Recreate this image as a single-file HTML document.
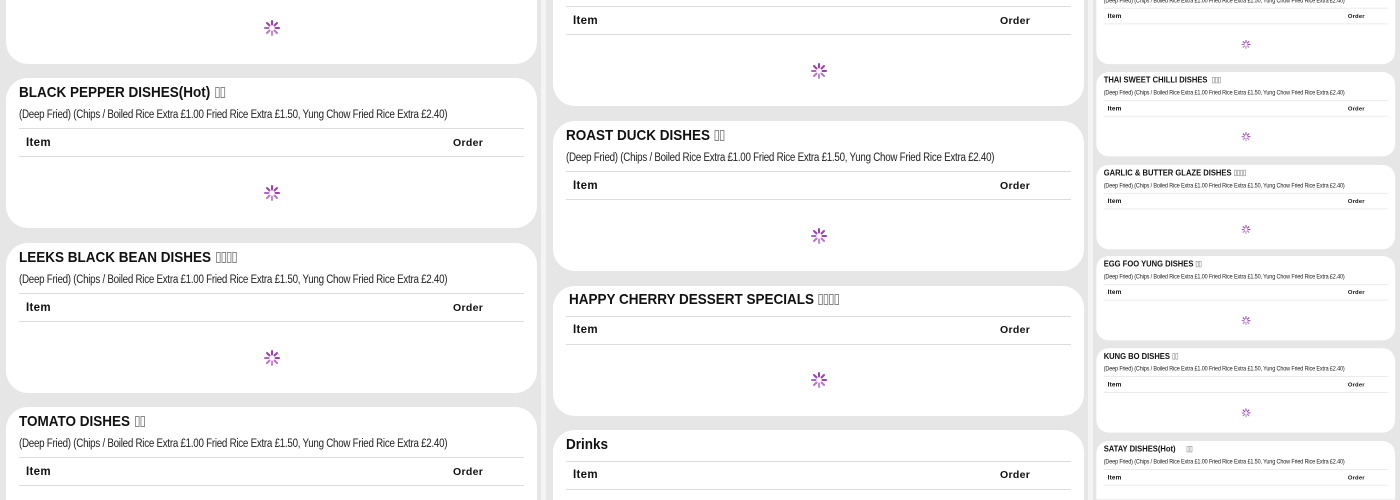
<!DOCTYPE html>
<html><head><meta charset="utf-8"><style>
*{margin:0;padding:0;box-sizing:border-box}
html,body{width:1400px;height:500px;overflow:hidden}
body{background:#e6e6e6;font-family:"Liberation Sans",sans-serif;position:relative;color:#111}
.col{position:absolute;top:0;width:541px;height:500px;overflow:hidden}
.sep{position:absolute;top:0;height:500px;background:#f4f4f4}
.card{position:absolute;left:6px;width:531px;background:#fff;border-radius:22px}
.t{position:absolute;left:13px;font-weight:bold;font-size:15px;line-height:18px;white-space:nowrap;transform:scaleX(0.9);transform-origin:0 0}
.s{position:absolute;left:13px;font-size:11.5px;line-height:14px;white-space:nowrap;letter-spacing:-0.3px;color:#222;transform:scaleX(0.85);transform-origin:0 0}
.ln{position:absolute;left:13px;right:13px;height:1px;background:#dcdcdc}
.i{position:absolute;left:20px;font-weight:bold;font-size:11.5px;line-height:14px;letter-spacing:.3px}
.o{position:absolute;left:447px;font-weight:bold;font-size:10.5px;line-height:14px;letter-spacing:.3px}
.sp{position:absolute;left:257px;width:18px;height:18px}
.bx{display:inline-block;width:5px;height:11px;border:1px solid #888;margin-left:1px;vertical-align:-1px}
</style></head><body>
<svg width="0" height="0" style="position:absolute;top:0;left:0"><defs><g id="spin" stroke="#a03cb8" stroke-width="2" stroke-linecap="round"><line x1="9" y1="2" x2="9" y2="5.5"/><line x1="9" y1="12.5" x2="9" y2="16" opacity=".6"/><line x1="2" y1="9" x2="5.5" y2="9" opacity=".8"/><line x1="12.5" y1="9" x2="16" y2="9"/><line x1="4" y1="4" x2="6.5" y2="6.5"/><line x1="11.5" y1="11.5" x2="14" y2="14" opacity=".7"/><line x1="14" y1="4" x2="11.5" y2="6.5"/><line x1="4" y1="14" x2="6.5" y2="11.5" opacity=".7"/></g></defs></svg>

<div class="sep" style="left:541px;width:5px"></div>
<div class="sep" style="left:1088px;width:5px"></div>

<!-- Column 1 -->
<div class="col" style="left:0">
 <div class="card" style="top:-86px;height:150px">
  <div class="ln" style="top:77px"></div><svg class="sp" style="top:105px"><use href="#spin"/></svg>
 </div>
 <div class="card" style="top:78px;height:150px">
  <div class="t" style="top:6px">BLACK PEPPER DISHES(Hot) <span class="bx"></span><span class="bx"></span></div>
  <div class="s" style="top:30px">(Deep Fried) (Chips / Boiled Rice Extra £1.00 Fried Rice Extra £1.50, Yung Chow Fried Rice Extra £2.40)</div>
  <div class="ln" style="top:50px"></div><div class="i" style="top:58px">Item</div><div class="o" style="top:58px">Order</div>
  <div class="ln" style="top:78px"></div><svg class="sp" style="top:106px"><use href="#spin"/></svg>
 </div>
 <div class="card" style="top:243px;height:150px">
  <div class="t" style="top:6px">LEEKS BLACK BEAN DISHES <span class="bx"></span><span class="bx"></span><span class="bx"></span><span class="bx"></span></div>
  <div class="s" style="top:30px">(Deep Fried) (Chips / Boiled Rice Extra £1.00 Fried Rice Extra £1.50, Yung Chow Fried Rice Extra £2.40)</div>
  <div class="ln" style="top:50px"></div><div class="i" style="top:58px">Item</div><div class="o" style="top:58px">Order</div>
  <div class="ln" style="top:78px"></div><svg class="sp" style="top:106px"><use href="#spin"/></svg>
 </div>
 <div class="card" style="top:407px;height:150px">
  <div class="t" style="top:6px">TOMATO DISHES <span class="bx"></span><span class="bx"></span></div>
  <div class="s" style="top:30px">(Deep Fried) (Chips / Boiled Rice Extra £1.00 Fried Rice Extra £1.50, Yung Chow Fried Rice Extra £2.40)</div>
  <div class="ln" style="top:50px"></div><div class="i" style="top:58px">Item</div><div class="o" style="top:58px">Order</div>
  <div class="ln" style="top:78px"></div>
 </div>
</div>

<!-- Column 2 -->
<div class="col" style="left:547px">
 <div class="card" style="top:-44px;height:150px">
  <div class="ln" style="top:50px"></div><div class="i" style="top:58px">Item</div><div class="o" style="top:58px">Order</div>
  <div class="ln" style="top:78px"></div><svg class="sp" style="top:106px"><use href="#spin"/></svg>
 </div>
 <div class="card" style="top:121px;height:150px">
  <div class="t" style="top:6px">ROAST DUCK DISHES <span class="bx"></span><span class="bx"></span></div>
  <div class="s" style="top:30px">(Deep Fried) (Chips / Boiled Rice Extra £1.00 Fried Rice Extra £1.50, Yung Chow Fried Rice Extra £2.40)</div>
  <div class="ln" style="top:50px"></div><div class="i" style="top:58px">Item</div><div class="o" style="top:58px">Order</div>
  <div class="ln" style="top:78px"></div><svg class="sp" style="top:106px"><use href="#spin"/></svg>
 </div>
 <div class="card" style="top:286px;height:130px">
  <div class="t" style="top:5px;left:16px">HAPPY CHERRY DESSERT SPECIALS <span class="bx"></span><span class="bx"></span><span class="bx"></span><span class="bx"></span></div>
  <div class="ln" style="top:30px"></div><div class="i" style="top:37px">Item</div><div class="o" style="top:37px">Order</div>
  <div class="ln" style="top:58px"></div><svg class="sp" style="top:85px"><use href="#spin"/></svg>
 </div>
 <div class="card" style="top:430px;height:130px">
  <div class="t" style="top:6px">Drinks</div>
  <div class="ln" style="top:31px"></div><div class="i" style="top:38px">Item</div><div class="o" style="top:38px">Order</div>
  <div class="ln" style="top:59px"></div>
 </div>
</div>

<!-- Column 3 (scaled) -->
<div class="col" style="left:1093px;transform:scale(0.5625);transform-origin:0 0;height:888px">
 <div class="card" style="top:-36px;height:150px">
  <div class="s" style="top:30px">(Deep Fried) (Chips / Boiled Rice Extra £1.00 Fried Rice Extra £1.50, Yung Chow Fried Rice Extra £2.40)</div>
  <div class="ln" style="top:50px"></div><div class="i" style="top:58px">Item</div><div class="o" style="top:58px">Order</div>
  <div class="ln" style="top:78px"></div><svg class="sp" style="top:106px"><use href="#spin"/></svg>
 </div>
 <div class="card" style="top:128px;height:150px">
  <div class="t" style="top:6px">THAI SWEET CHILLI DISHES &nbsp;<span class="bx"></span><span class="bx"></span><span class="bx"></span></div>
  <div class="s" style="top:30px">(Deep Fried) (Chips / Boiled Rice Extra £1.00 Fried Rice Extra £1.50, Yung Chow Fried Rice Extra £2.40)</div>
  <div class="ln" style="top:50px"></div><div class="i" style="top:58px">Item</div><div class="o" style="top:58px">Order</div>
  <div class="ln" style="top:78px"></div><svg class="sp" style="top:106px"><use href="#spin"/></svg>
 </div>
 <div class="card" style="top:293px;height:150px">
  <div class="t" style="top:6px">GARLIC &amp; BUTTER GLAZE DISHES <span class="bx"></span><span class="bx"></span><span class="bx"></span><span class="bx"></span></div>
  <div class="s" style="top:30px">(Deep Fried) (Chips / Boiled Rice Extra £1.00 Fried Rice Extra £1.50, Yung Chow Fried Rice Extra £2.40)</div>
  <div class="ln" style="top:50px"></div><div class="i" style="top:58px">Item</div><div class="o" style="top:58px">Order</div>
  <div class="ln" style="top:78px"></div><svg class="sp" style="top:106px"><use href="#spin"/></svg>
 </div>
 <div class="card" style="top:455px;height:150px">
  <div class="t" style="top:6px">EGG FOO YUNG DISHES <span class="bx"></span><span class="bx"></span></div>
  <div class="s" style="top:30px">(Deep Fried) (Chips / Boiled Rice Extra £1.00 Fried Rice Extra £1.50, Yung Chow Fried Rice Extra £2.40)</div>
  <div class="ln" style="top:50px"></div><div class="i" style="top:58px">Item</div><div class="o" style="top:58px">Order</div>
  <div class="ln" style="top:78px"></div><svg class="sp" style="top:106px"><use href="#spin"/></svg>
 </div>
 <div class="card" style="top:619px;height:150px">
  <div class="t" style="top:6px">KUNG BO DISHES <span class="bx"></span><span class="bx"></span></div>
  <div class="s" style="top:30px">(Deep Fried) (Chips / Boiled Rice Extra £1.00 Fried Rice Extra £1.50, Yung Chow Fried Rice Extra £2.40)</div>
  <div class="ln" style="top:50px"></div><div class="i" style="top:58px">Item</div><div class="o" style="top:58px">Order</div>
  <div class="ln" style="top:78px"></div><svg class="sp" style="top:106px"><use href="#spin"/></svg>
 </div>
 <div class="card" style="top:784px;height:150px">
  <div class="t" style="top:6px">SATAY DISHES(Hot) &nbsp; &nbsp; <span class="bx"></span><span class="bx"></span></div>
  <div class="s" style="top:30px">(Deep Fried) (Chips / Boiled Rice Extra £1.00 Fried Rice Extra £1.50, Yung Chow Fried Rice Extra £2.40)</div>
  <div class="ln" style="top:50px"></div><div class="i" style="top:58px">Item</div><div class="o" style="top:58px">Order</div>
  <div class="ln" style="top:78px"></div>
 </div>
</div>
</body></html>
